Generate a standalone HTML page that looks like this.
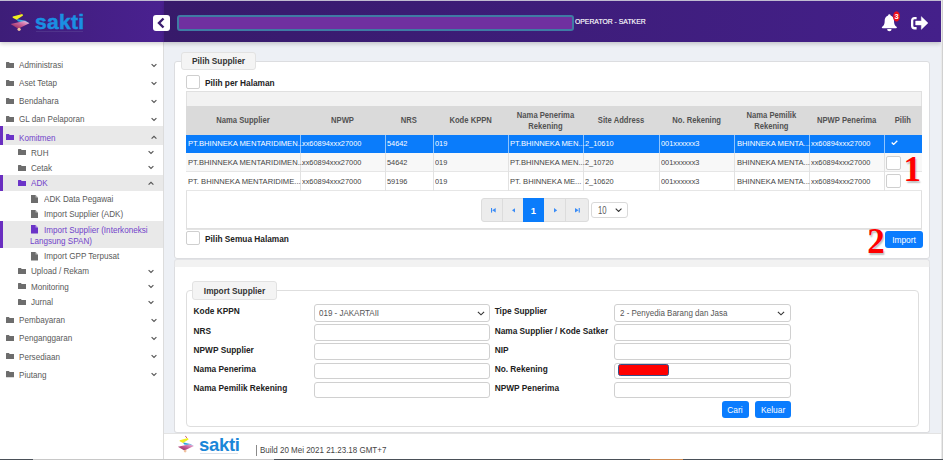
<!DOCTYPE html>
<html><head><meta charset="utf-8">
<style>
*{box-sizing:border-box;margin:0;padding:0}
html,body{width:943px;height:460px;overflow:hidden;background:#fff;font-family:"Liberation Sans",sans-serif;color:#333}
.a{position:absolute}
#hdrL{left:0;top:1px;width:164px;height:41.2px;box-shadow:0 2px 4px rgba(0,0,0,0.18);background:linear-gradient(90deg,#3d1d78,#4a2190)}
#hdrR{left:164px;top:1px;width:777px;height:41.2px;box-shadow:0 2px 4px rgba(0,0,0,0.18);background:linear-gradient(90deg,#371a6a,#44208a)}
#topline{left:0;top:0;width:943px;height:1px;background:#c4c0d6}
#rline{left:941px;top:0;width:2px;height:459px;background:linear-gradient(90deg,#f6f6f6,#c4c4c4)}
#side{left:0;top:42px;width:164px;height:417px;background:#fff;border-right:1px solid #dcdcdc}
#content{left:164px;top:42px;width:777px;height:391px;background:#edf0f5}
.st{font-size:9px;line-height:12px;white-space:nowrap;transform:scaleX(0.9);transform-origin:0 0}
.si{position:absolute;left:0;width:163px;height:18px;font-size:8.2px;color:#555;white-space:nowrap}
.si .t{position:absolute;top:0;line-height:18px}
.si .ch{position:absolute;top:6px;width:6px;height:4px}
.hl{background:#e8e8e8}
.hl .bar{position:absolute;left:0;top:0;width:3px;height:100%;background:#6a2ec0}
.act{color:#7a3fd0}
.card{position:absolute;background:#fff;border:1px solid #dcdde0;border-radius:3px}
.legend{position:absolute;background:#f4f4f4;border:1px solid #e2e2e2;border-radius:3px;font-weight:bold;font-size:8.3px;color:#333;text-align:center}
.cb{position:absolute;width:14px;height:14px;border:1px solid #cfcfcf;border-radius:2px;background:#fff}
.lbl{position:absolute;font-size:8.3px;font-weight:bold;color:#222;white-space:nowrap}
table{border-collapse:collapse;table-layout:fixed}
.tb td{font-size:7.2px;white-space:nowrap;overflow:hidden;padding-left:2px;height:19px;border-right:1px solid #e2e2e2;border-bottom:1px solid #e8e8e8}
.tb th{font-size:7.5px;font-weight:bold;color:#555;text-align:center;height:28px;background:#dadada;line-height:10px}
.th{font-size:8.3px;font-weight:bold;color:#525252;text-align:center;line-height:10.5px;transform:scaleX(0.92)}
.td{font-size:8px;line-height:11px;white-space:nowrap;transform:scaleX(0.9);transform-origin:0 0}
.flb{font-size:8.3px;font-weight:bold;color:#222;white-space:nowrap;line-height:11px}
.tx{font-size:8.9px;line-height:11px;white-space:nowrap;transform:scaleX(0.9);transform-origin:0 0}
.inp{position:absolute;background:#fff;border:1px solid #d0d0d0;border-radius:3px}
.btn{position:absolute;background:#0a7cfe;border-radius:3px;color:#fff;font-size:8.4px;text-align:center}
</style></head><body>
<div class="a" id="topline"></div>
<div class="a" id="side"></div>
<div class="a" id="content"></div>
<div class="a" id="hdrL"></div>
<div class="a" id="hdrR"></div>
<!-- logo -->
<svg class="a" style="left:6px;top:8px" width="30" height="28" viewBox="0 0 30 28">
  <defs><linearGradient id="pk" x1="0" y1="1" x2="1" y2="0"><stop offset="0" stop-color="#8a1f4a"/><stop offset="0.55" stop-color="#c8609a"/><stop offset="1" stop-color="#f0c8e8"/></linearGradient>
  <linearGradient id="bl" x1="0" y1="0" x2="1" y2="0"><stop offset="0" stop-color="#1a9ad8"/><stop offset="1" stop-color="#7ac8f0"/></linearGradient></defs>
  <path d="M13.3 3.8 L15.3 5.6" stroke="#c02040" stroke-width="1"/>
  <path d="M10.2 11 L19.5 12.8 L23.3 15.2 L12 13.6 Z" fill="url(#bl)"/>
  <path d="M4.6 16.1 L18.3 13.1 L23.4 15.2 L12.2 20.7 Z" fill="url(#pk)"/>
  <path d="M6.7 8.4 L16.3 5.9 L17.1 7.6 L10.6 11.7 L6.7 9.8 Z" fill="#f0f020"/>
  <circle cx="13.1" cy="21.3" r="1.6" fill="#f0c0a0"/>
</svg>
<div class="a" style="left:35px;top:10px;font-size:21px;font-weight:bold;color:#1a8fe2;letter-spacing:0.3px;line-height:24px;-webkit-text-stroke:0.5px #1a8fe2">sakti</div>
<div class="a" style="left:36px;top:30.5px;width:47px;height:1px;background:#6a5aa0;opacity:0.35"></div>
<!-- toggle -->
<div class="a" style="left:153px;top:14.6px;width:16.6px;height:16.6px;background:#fff;border-radius:3px"></div>
<svg class="a" style="left:153px;top:14.3px" width="17" height="17" viewBox="0 0 17 17"><path d="M10.5 4.5 L6 9 L10.5 13.5" stroke="#3a1c6e" stroke-width="2.4" fill="none"/></svg>
<div class="a" style="left:177px;top:15.3px;width:396.5px;height:16px;background:#7030a0;border:2px solid #3f7ca4;border-radius:3px"></div>
<div class="a" style="left:575.3px;top:17px;font-size:7.6px;color:#fff;line-height:10px;transform:scaleX(0.9);transform-origin:0 0;-webkit-text-stroke:0.15px #fff">OPERATOR - SATKER</div>
<!-- bell -->
<svg class="a" style="left:880px;top:10px" width="22" height="23" viewBox="0 0 22 23">
  <circle cx="9.35" cy="5.4" r="1.2" fill="#fff"/>
  <path d="M9.35 5.6 C6 5.6 4.7 8.2 4.7 11 C4.7 14 3.8 15.9 1.9 17.1 Q1.4 18.2 2.6 18.2 L16.1 18.2 Q17.3 18.2 16.8 17.1 C14.9 15.9 14 14 14 11 C14 8.2 12.7 5.6 9.35 5.6 Z" fill="#fff"/>
  <path d="M7.1 19 L11.6 19 Q11.6 21.3 9.35 21.3 Q7.1 21.3 7.1 19 Z" fill="#fff"/>
  <ellipse cx="16.5" cy="6.4" rx="3.4" ry="5.2" fill="#ee1018"/>
  <text x="16.5" y="9.1" font-size="7.5" font-family="Liberation Sans" fill="#fff" text-anchor="middle" font-weight="bold">3</text>
</svg>
<!-- logout -->
<svg class="a" style="left:911px;top:16px" width="18" height="14" viewBox="0 0 18 14">
  <path d="M5.6 2.15 L3.6 2.15 Q1.15 2.15 1.15 4.6 L1.15 9.8 Q1.15 12.25 3.6 12.25 L5.6 12.25" stroke="#fff" stroke-width="2.3" fill="none"/>
  <path d="M4.6 5 L10.3 5 L10.3 0.6 L17 7 L10.3 13.4 L10.3 9 L4.6 9 Z" fill="#fff" stroke="#fff" stroke-width="0.4" stroke-linejoin="round"/>
</svg>

<div id="sidebar">
<svg class="a" style="left:6px;top:61.7px" width="8.3" height="6.3" viewBox="0 0 9 7" preserveAspectRatio="none"><path d="M0 0.6 Q0 0 0.6 0 L3.2 0 L4 1 L8.4 1 Q9 1 9 1.6 L9 6.4 Q9 7 8.4 7 L0.6 7 Q0 7 0 6.4 Z" fill="#6d6d6d"/></svg>
<div class="a st" style="left:18.8px;top:59px;color:#5a5a5a">Administrasi</div>
<svg class="a" style="left:151px;top:62.5px" width="6" height="5" viewBox="0 0 6 5"><path d="M0.6 1.1 L3 3.4 L5.4 1.1" stroke="#555" stroke-width="1.15" fill="none"/></svg>
<svg class="a" style="left:6px;top:79.9px" width="8.3" height="6.3" viewBox="0 0 9 7" preserveAspectRatio="none"><path d="M0 0.6 Q0 0 0.6 0 L3.2 0 L4 1 L8.4 1 Q9 1 9 1.6 L9 6.4 Q9 7 8.4 7 L0.6 7 Q0 7 0 6.4 Z" fill="#6d6d6d"/></svg>
<div class="a st" style="left:18.8px;top:77.2px;color:#5a5a5a">Aset Tetap</div>
<svg class="a" style="left:151px;top:80.7px" width="6" height="5" viewBox="0 0 6 5"><path d="M0.6 1.1 L3 3.4 L5.4 1.1" stroke="#555" stroke-width="1.15" fill="none"/></svg>
<svg class="a" style="left:6px;top:98.0px" width="8.3" height="6.3" viewBox="0 0 9 7" preserveAspectRatio="none"><path d="M0 0.6 Q0 0 0.6 0 L3.2 0 L4 1 L8.4 1 Q9 1 9 1.6 L9 6.4 Q9 7 8.4 7 L0.6 7 Q0 7 0 6.4 Z" fill="#6d6d6d"/></svg>
<div class="a st" style="left:18.8px;top:95.3px;color:#5a5a5a">Bendahara</div>
<svg class="a" style="left:151px;top:98.8px" width="6" height="5" viewBox="0 0 6 5"><path d="M0.6 1.1 L3 3.4 L5.4 1.1" stroke="#555" stroke-width="1.15" fill="none"/></svg>
<svg class="a" style="left:6px;top:116.10000000000001px" width="8.3" height="6.3" viewBox="0 0 9 7" preserveAspectRatio="none"><path d="M0 0.6 Q0 0 0.6 0 L3.2 0 L4 1 L8.4 1 Q9 1 9 1.6 L9 6.4 Q9 7 8.4 7 L0.6 7 Q0 7 0 6.4 Z" fill="#6d6d6d"/></svg>
<div class="a st" style="left:18.8px;top:113.4px;color:#5a5a5a">GL dan Pelaporan</div>
<svg class="a" style="left:151px;top:116.9px" width="6" height="5" viewBox="0 0 6 5"><path d="M0.6 1.1 L3 3.4 L5.4 1.1" stroke="#555" stroke-width="1.15" fill="none"/></svg>
<div class="a" style="left:0;top:126px;width:163px;height:18.5px;background:#e9e9e9"></div>
<div class="a" style="left:0;top:126px;width:3px;height:18.5px;background:#6a2ec0"></div>
<svg class="a" style="left:6px;top:134.2px" width="8.3" height="6.3" viewBox="0 0 9 7" preserveAspectRatio="none"><path d="M0 0.6 Q0 0 0.6 0 L3.2 0 L4 1 L8.4 1 Q9 1 9 1.6 L9 6.4 Q9 7 8.4 7 L0.6 7 Q0 7 0 6.4 Z" fill="#6b34c8"/></svg>
<div class="a st" style="left:18.8px;top:131.5px;color:#7143c9">Komitmen</div>
<svg class="a" style="left:151px;top:135.0px" width="6" height="5" viewBox="0 0 6 5"><path d="M0.6 3.6 L3 1.3 L5.4 3.6" stroke="#555" stroke-width="1.15" fill="none"/></svg>
<svg class="a" style="left:17.5px;top:149.2px" width="8.3" height="6.3" viewBox="0 0 9 7" preserveAspectRatio="none"><path d="M0 0.6 Q0 0 0.6 0 L3.2 0 L4 1 L8.4 1 Q9 1 9 1.6 L9 6.4 Q9 7 8.4 7 L0.6 7 Q0 7 0 6.4 Z" fill="#6d6d6d"/></svg>
<div class="a st" style="left:30.8px;top:146.5px;color:#5a5a5a">RUH</div>
<svg class="a" style="left:147.5px;top:150.0px" width="6" height="5" viewBox="0 0 6 5"><path d="M0.6 1.1 L3 3.4 L5.4 1.1" stroke="#555" stroke-width="1.15" fill="none"/></svg>
<svg class="a" style="left:17.5px;top:164.5px" width="8.3" height="6.3" viewBox="0 0 9 7" preserveAspectRatio="none"><path d="M0 0.6 Q0 0 0.6 0 L3.2 0 L4 1 L8.4 1 Q9 1 9 1.6 L9 6.4 Q9 7 8.4 7 L0.6 7 Q0 7 0 6.4 Z" fill="#6d6d6d"/></svg>
<div class="a st" style="left:30.8px;top:161.8px;color:#5a5a5a">Cetak</div>
<svg class="a" style="left:147.5px;top:165.3px" width="6" height="5" viewBox="0 0 6 5"><path d="M0.6 1.1 L3 3.4 L5.4 1.1" stroke="#555" stroke-width="1.15" fill="none"/></svg>
<div class="a" style="left:0;top:175px;width:163px;height:15.5px;background:#e9e9e9"></div>
<div class="a" style="left:0;top:175px;width:3px;height:15.5px;background:#6a2ec0"></div>
<svg class="a" style="left:17.5px;top:179.7px" width="8.3" height="6.3" viewBox="0 0 9 7" preserveAspectRatio="none"><path d="M0 0.6 Q0 0 0.6 0 L3.2 0 L4 1 L8.4 1 Q9 1 9 1.6 L9 6.4 Q9 7 8.4 7 L0.6 7 Q0 7 0 6.4 Z" fill="#6b34c8"/></svg>
<div class="a st" style="left:30.8px;top:177px;color:#7143c9">ADK</div>
<svg class="a" style="left:147.5px;top:180.5px" width="6" height="5" viewBox="0 0 6 5"><path d="M0.6 3.6 L3 1.3 L5.4 3.6" stroke="#555" stroke-width="1.15" fill="none"/></svg>
<svg class="a" style="left:31.3px;top:194.60000000000002px" width="7" height="8.5" viewBox="0 0 7 8.5"><path d="M0 0 L4.5 0 L7 2.5 L7 8.5 L0 8.5 Z" fill="#6d6d6d"/><path d="M4.5 0 L4.5 2.5 L7 2.5" fill="#fff" opacity="0.5"/></svg>
<div class="a st" style="left:43.5px;top:192.8px;color:#5a5a5a">ADK Data Pegawai</div>
<svg class="a" style="left:31.3px;top:209.8px" width="7" height="8.5" viewBox="0 0 7 8.5"><path d="M0 0 L4.5 0 L7 2.5 L7 8.5 L0 8.5 Z" fill="#6d6d6d"/><path d="M4.5 0 L4.5 2.5 L7 2.5" fill="#fff" opacity="0.5"/></svg>
<div class="a st" style="left:43.5px;top:208px;color:#5a5a5a">Import Supplier (ADK)</div>
<div class="a" style="left:0;top:221px;width:163px;height:27px;background:#e9e9e9"></div>
<div class="a" style="left:0;top:221px;width:3px;height:27px;background:#6a2ec0"></div>
<svg class="a" style="left:31.3px;top:225.4px" width="7" height="8.5" viewBox="0 0 7 8.5"><path d="M0 0 L4.5 0 L7 2.5 L7 8.5 L0 8.5 Z" fill="#6b34c8"/><path d="M4.5 0 L4.5 2.5 L7 2.5" fill="#fff" opacity="0.5"/></svg>
<div class="a st" style="left:43.5px;top:223.6px;color:#7143c9">Import Supplier (Interkoneksi</div>
<div class="a st" style="left:29.7px;top:234.6px;color:#7143c9">Langsung SPAN)</div>
<svg class="a" style="left:31.3px;top:252.0px" width="7" height="8.5" viewBox="0 0 7 8.5"><path d="M0 0 L4.5 0 L7 2.5 L7 8.5 L0 8.5 Z" fill="#6d6d6d"/><path d="M4.5 0 L4.5 2.5 L7 2.5" fill="#fff" opacity="0.5"/></svg>
<div class="a st" style="left:43.5px;top:250.2px;color:#5a5a5a">Import GPP Terpusat</div>
<svg class="a" style="left:17.5px;top:268.09999999999997px" width="8.3" height="6.3" viewBox="0 0 9 7" preserveAspectRatio="none"><path d="M0 0.6 Q0 0 0.6 0 L3.2 0 L4 1 L8.4 1 Q9 1 9 1.6 L9 6.4 Q9 7 8.4 7 L0.6 7 Q0 7 0 6.4 Z" fill="#6d6d6d"/></svg>
<div class="a st" style="left:30.8px;top:265.4px;color:#5a5a5a">Upload / Rekam</div>
<svg class="a" style="left:147.5px;top:268.9px" width="6" height="5" viewBox="0 0 6 5"><path d="M0.6 1.1 L3 3.4 L5.4 1.1" stroke="#555" stroke-width="1.15" fill="none"/></svg>
<svg class="a" style="left:17.5px;top:283.2px" width="8.3" height="6.3" viewBox="0 0 9 7" preserveAspectRatio="none"><path d="M0 0.6 Q0 0 0.6 0 L3.2 0 L4 1 L8.4 1 Q9 1 9 1.6 L9 6.4 Q9 7 8.4 7 L0.6 7 Q0 7 0 6.4 Z" fill="#6d6d6d"/></svg>
<div class="a st" style="left:30.8px;top:280.5px;color:#5a5a5a">Monitoring</div>
<svg class="a" style="left:147.5px;top:284.0px" width="6" height="5" viewBox="0 0 6 5"><path d="M0.6 1.1 L3 3.4 L5.4 1.1" stroke="#555" stroke-width="1.15" fill="none"/></svg>
<svg class="a" style="left:17.5px;top:298.9px" width="8.3" height="6.3" viewBox="0 0 9 7" preserveAspectRatio="none"><path d="M0 0.6 Q0 0 0.6 0 L3.2 0 L4 1 L8.4 1 Q9 1 9 1.6 L9 6.4 Q9 7 8.4 7 L0.6 7 Q0 7 0 6.4 Z" fill="#6d6d6d"/></svg>
<div class="a st" style="left:30.8px;top:296.2px;color:#5a5a5a">Jurnal</div>
<svg class="a" style="left:147.5px;top:299.7px" width="6" height="5" viewBox="0 0 6 5"><path d="M0.6 1.1 L3 3.4 L5.4 1.1" stroke="#555" stroke-width="1.15" fill="none"/></svg>
<svg class="a" style="left:6px;top:317.0px" width="8.3" height="6.3" viewBox="0 0 9 7" preserveAspectRatio="none"><path d="M0 0.6 Q0 0 0.6 0 L3.2 0 L4 1 L8.4 1 Q9 1 9 1.6 L9 6.4 Q9 7 8.4 7 L0.6 7 Q0 7 0 6.4 Z" fill="#6d6d6d"/></svg>
<div class="a st" style="left:18.8px;top:314.3px;color:#5a5a5a">Pembayaran</div>
<svg class="a" style="left:151px;top:317.8px" width="6" height="5" viewBox="0 0 6 5"><path d="M0.6 1.1 L3 3.4 L5.4 1.1" stroke="#555" stroke-width="1.15" fill="none"/></svg>
<svg class="a" style="left:6px;top:335.09999999999997px" width="8.3" height="6.3" viewBox="0 0 9 7" preserveAspectRatio="none"><path d="M0 0.6 Q0 0 0.6 0 L3.2 0 L4 1 L8.4 1 Q9 1 9 1.6 L9 6.4 Q9 7 8.4 7 L0.6 7 Q0 7 0 6.4 Z" fill="#6d6d6d"/></svg>
<div class="a st" style="left:18.8px;top:332.4px;color:#5a5a5a">Penganggaran</div>
<svg class="a" style="left:151px;top:335.9px" width="6" height="5" viewBox="0 0 6 5"><path d="M0.6 1.1 L3 3.4 L5.4 1.1" stroke="#555" stroke-width="1.15" fill="none"/></svg>
<svg class="a" style="left:6px;top:353.2px" width="8.3" height="6.3" viewBox="0 0 9 7" preserveAspectRatio="none"><path d="M0 0.6 Q0 0 0.6 0 L3.2 0 L4 1 L8.4 1 Q9 1 9 1.6 L9 6.4 Q9 7 8.4 7 L0.6 7 Q0 7 0 6.4 Z" fill="#6d6d6d"/></svg>
<div class="a st" style="left:18.8px;top:350.5px;color:#5a5a5a">Persediaan</div>
<svg class="a" style="left:151px;top:354.0px" width="6" height="5" viewBox="0 0 6 5"><path d="M0.6 1.1 L3 3.4 L5.4 1.1" stroke="#555" stroke-width="1.15" fill="none"/></svg>
<svg class="a" style="left:6px;top:371.3px" width="8.3" height="6.3" viewBox="0 0 9 7" preserveAspectRatio="none"><path d="M0 0.6 Q0 0 0.6 0 L3.2 0 L4 1 L8.4 1 Q9 1 9 1.6 L9 6.4 Q9 7 8.4 7 L0.6 7 Q0 7 0 6.4 Z" fill="#6d6d6d"/></svg>
<div class="a st" style="left:18.8px;top:368.6px;color:#5a5a5a">Piutang</div>
<svg class="a" style="left:151px;top:372.1px" width="6" height="5" viewBox="0 0 6 5"><path d="M0.6 1.1 L3 3.4 L5.4 1.1" stroke="#555" stroke-width="1.15" fill="none"/></svg>
</div><!--/sidebar-->

<!-- card 1 -->
<div class="card" style="left:174px;top:61px;width:756px;height:198px"></div>
<div class="legend" style="left:181px;top:52.2px;width:75px;height:18.3px;line-height:16.5px">Pilih Supplier</div>
<div class="cb" style="left:186px;top:75px"></div>
<div class="lbl" style="left:205px;top:78px">Pilih per Halaman</div>

<div class="a" style="left:186px;top:91px;width:736px;height:138px;border:1px solid #e0e0e0"></div>
<div class="a" style="left:187px;top:92px;width:734px;height:14px;background:#f2f2f2"></div>

<!--table-->
<div class="a" style="left:186px;top:106px;width:736px;height:28.5px;background:#dadada"></div>
<div class="a th" style="left:186px;top:115px;width:114px">Nama Supplier</div>
<div class="a th" style="left:300px;top:115px;width:85px">NPWP</div>
<div class="a th" style="left:385px;top:115px;width:47.69999999999999px">NRS</div>
<div class="a th" style="left:432.7px;top:115px;width:75.30000000000001px">Kode KPPN</div>
<div class="a th" style="left:508px;top:110px;width:75px">Nama Penerima<br>Rekening</div>
<div class="a th" style="left:583px;top:115px;width:76px">Site Address</div>
<div class="a th" style="left:659px;top:115px;width:75.29999999999995px">No. Rekening</div>
<div class="a th" style="left:734.3px;top:110px;width:74.70000000000005px">Nama Pemilik<br>Rekening</div>
<div class="a th" style="left:809px;top:115px;width:75.29999999999995px">NPWP Penerima</div>
<div class="a th" style="left:884.3px;top:115px;width:37.700000000000045px">Pilih</div>
<div class="a" style="left:186px;top:134.5px;width:736px;height:18.5px;background:#0a7cfb;border-bottom:1px solid #0a7cfb"></div>
<div class="a" style="left:300px;top:134.5px;width:1px;height:18.5px;background:rgba(255,255,255,0.55)"></div>
<div class="a" style="left:385px;top:134.5px;width:1px;height:18.5px;background:rgba(255,255,255,0.55)"></div>
<div class="a" style="left:432.7px;top:134.5px;width:1px;height:18.5px;background:rgba(255,255,255,0.55)"></div>
<div class="a" style="left:508px;top:134.5px;width:1px;height:18.5px;background:rgba(255,255,255,0.55)"></div>
<div class="a" style="left:583px;top:134.5px;width:1px;height:18.5px;background:rgba(255,255,255,0.55)"></div>
<div class="a" style="left:659px;top:134.5px;width:1px;height:18.5px;background:rgba(255,255,255,0.55)"></div>
<div class="a" style="left:734.3px;top:134.5px;width:1px;height:18.5px;background:rgba(255,255,255,0.55)"></div>
<div class="a" style="left:809px;top:134.5px;width:1px;height:18.5px;background:rgba(255,255,255,0.55)"></div>
<div class="a" style="left:884.3px;top:134.5px;width:1px;height:18.5px;background:rgba(255,255,255,0.55)"></div>
<div class="a td" style="left:188.2px;top:138.25px;color:#fff;transform:scaleX(0.95)">PT.BHINNEKA MENTARIDIMEN...</div>
<div class="a td" style="left:302.2px;top:138.25px;color:#fff;transform:scaleX(0.92)">xx60894xxx27000</div>
<div class="a td" style="left:387.2px;top:138.25px;color:#fff;transform:scaleX(0.92)">54642</div>
<div class="a td" style="left:434.9px;top:138.25px;color:#fff;transform:scaleX(0.92)">019</div>
<div class="a td" style="left:510.2px;top:138.25px;color:#fff;transform:scaleX(0.95)">PT.BHINNEKA MEN...</div>
<div class="a td" style="left:585.2px;top:138.25px;color:#fff;transform:scaleX(0.92)">2_10610</div>
<div class="a td" style="left:661.2px;top:138.25px;color:#fff;transform:scaleX(0.92)">001xxxxxx3</div>
<div class="a td" style="left:736.5px;top:138.25px;color:#fff;transform:scaleX(0.95)">BHINNEKA MENTA...</div>
<div class="a td" style="left:811.2px;top:138.25px;color:#fff;transform:scaleX(0.92)">xx60894xxx27000</div>
<div class="a" style="left:186px;top:153px;width:736px;height:19px;background:#f8f8f8;border-bottom:1px solid #e6e6e6"></div>
<div class="a" style="left:300px;top:153px;width:1px;height:19px;background:#e2e2e2"></div>
<div class="a" style="left:385px;top:153px;width:1px;height:19px;background:#e2e2e2"></div>
<div class="a" style="left:432.7px;top:153px;width:1px;height:19px;background:#e2e2e2"></div>
<div class="a" style="left:508px;top:153px;width:1px;height:19px;background:#e2e2e2"></div>
<div class="a" style="left:583px;top:153px;width:1px;height:19px;background:#e2e2e2"></div>
<div class="a" style="left:659px;top:153px;width:1px;height:19px;background:#e2e2e2"></div>
<div class="a" style="left:734.3px;top:153px;width:1px;height:19px;background:#e2e2e2"></div>
<div class="a" style="left:809px;top:153px;width:1px;height:19px;background:#e2e2e2"></div>
<div class="a" style="left:884.3px;top:153px;width:1px;height:19px;background:#e2e2e2"></div>
<div class="a td" style="left:188.2px;top:157.0px;color:#444;transform:scaleX(0.95)">PT.BHINNEKA MENTARIDIMEN...</div>
<div class="a td" style="left:302.2px;top:157.0px;color:#444;transform:scaleX(0.92)">xx60894xxx27000</div>
<div class="a td" style="left:387.2px;top:157.0px;color:#444;transform:scaleX(0.92)">54642</div>
<div class="a td" style="left:434.9px;top:157.0px;color:#444;transform:scaleX(0.92)">019</div>
<div class="a td" style="left:510.2px;top:157.0px;color:#444;transform:scaleX(0.95)">PT.BHINNEKA MEN...</div>
<div class="a td" style="left:585.2px;top:157.0px;color:#444;transform:scaleX(0.92)">2_10720</div>
<div class="a td" style="left:661.2px;top:157.0px;color:#444;transform:scaleX(0.92)">001xxxxxx3</div>
<div class="a td" style="left:736.5px;top:157.0px;color:#444;transform:scaleX(0.95)">BHINNEKA MENTA...</div>
<div class="a td" style="left:811.2px;top:157.0px;color:#444;transform:scaleX(0.92)">xx60894xxx27000</div>
<div class="a" style="left:186px;top:172px;width:736px;height:18.5px;background:#fff;border-bottom:1px solid #e6e6e6"></div>
<div class="a" style="left:300px;top:172px;width:1px;height:18.5px;background:#e2e2e2"></div>
<div class="a" style="left:385px;top:172px;width:1px;height:18.5px;background:#e2e2e2"></div>
<div class="a" style="left:432.7px;top:172px;width:1px;height:18.5px;background:#e2e2e2"></div>
<div class="a" style="left:508px;top:172px;width:1px;height:18.5px;background:#e2e2e2"></div>
<div class="a" style="left:583px;top:172px;width:1px;height:18.5px;background:#e2e2e2"></div>
<div class="a" style="left:659px;top:172px;width:1px;height:18.5px;background:#e2e2e2"></div>
<div class="a" style="left:734.3px;top:172px;width:1px;height:18.5px;background:#e2e2e2"></div>
<div class="a" style="left:809px;top:172px;width:1px;height:18.5px;background:#e2e2e2"></div>
<div class="a" style="left:884.3px;top:172px;width:1px;height:18.5px;background:#e2e2e2"></div>
<div class="a td" style="left:188.2px;top:175.75px;color:#444;transform:scaleX(0.95)">PT. BHINNEKA MENTARIDIME...</div>
<div class="a td" style="left:302.2px;top:175.75px;color:#444;transform:scaleX(0.92)">xx60894xxx27000</div>
<div class="a td" style="left:387.2px;top:175.75px;color:#444;transform:scaleX(0.92)">59196</div>
<div class="a td" style="left:434.9px;top:175.75px;color:#444;transform:scaleX(0.92)">019</div>
<div class="a td" style="left:510.2px;top:175.75px;color:#444;transform:scaleX(0.95)">PT. BHINNEKA ME...</div>
<div class="a td" style="left:585.2px;top:175.75px;color:#444;transform:scaleX(0.92)">2_10620</div>
<div class="a td" style="left:661.2px;top:175.75px;color:#444;transform:scaleX(0.92)">001xxxxxx3</div>
<div class="a td" style="left:736.5px;top:175.75px;color:#444;transform:scaleX(0.95)">BHINNEKA MENTA...</div>
<div class="a td" style="left:811.2px;top:175.75px;color:#444;transform:scaleX(0.92)">xx60894xxx27000</div>
<svg class="a" style="left:890.5px;top:140px" width="7" height="5.4" viewBox="0 0 7 5.4"><path d="M0.7 2.6 L2.6 4.4 L6.3 0.7" stroke="#fff" stroke-width="1.35" fill="none"/></svg>
<div class="cb" style="left:886px;top:155.5px;width:15px;height:14px"></div>
<div class="cb" style="left:886px;top:174px;width:15px;height:14px"></div>
<div class="a" style="left:903.5px;top:151.5px;font-family:'Liberation Serif';font-weight:bold;font-size:35px;color:#f00;line-height:35px;z-index:10;text-shadow:1px 1.5px 1.5px rgba(0,0,0,0.25)">1</div>
<!--/table-->
<div class="cb" style="left:186px;top:231px"></div>
<div class="lbl" style="left:205px;top:234px">Pilih Semua Halaman</div>
<div class="btn" style="left:885px;top:231px;width:38px;height:17px;line-height:18px">Import</div>
<div class="a" style="left:867.3px;top:223.5px;font-family:'Liberation Serif';font-weight:bold;font-size:35px;color:#f00;line-height:35px;z-index:10;text-shadow:1px 1.5px 1.5px rgba(0,0,0,0.25)">2</div>

<!-- card 2 -->
<div class="a" style="left:174px;top:259px;width:756px;height:8px;background:#f2f2f2;border:1px solid #e2e3e6;border-bottom:none;border-radius:3px 3px 0 0"></div>
<div class="card" style="left:174px;top:267px;width:756px;height:166px;border-top:none;border-radius:0 0 3px 3px"></div>
<div class="a" style="left:186px;top:290px;width:733px;height:137px;border:1px solid #dedede;border-radius:4px"></div>
<div class="legend" style="left:192px;top:281px;width:85px;height:19px;line-height:18px">Import Supplier</div>

<!-- footer -->
<div class="a" style="left:164px;top:433px;width:777px;height:26px;background:#fff;border-top:1px solid #e3e3e3"></div>
<div class="a" style="left:0;top:459px;width:943px;height:1px;background:#4a5058"></div><div class="a" style="left:33px;top:459px;width:241px;height:1px;background:#c8c8c8"></div><div class="a" style="left:650px;top:459px;width:33px;height:1px;background:#d08a50"></div>
<!--rest-->
<div class="a" style="left:481px;top:198px;width:107.5px;height:23.5px;background:#ececec;border:1px solid #dcdcdc;border-radius:3px"></div>
<div class="a" style="left:502.4px;top:198px;width:1px;height:23.5px;background:#dcdcdc"></div>
<div class="a" style="left:565px;top:198px;width:1px;height:23.5px;background:#dcdcdc"></div>
<div class="a" style="left:523px;top:198px;width:21px;height:23.5px;background:#0a7cfb"></div>
<div class="a" style="left:523px;top:204.5px;width:21px;font-size:9.5px;font-weight:bold;color:#fff;text-align:center;line-height:11px">1</div>
<svg class="a" style="left:490.8px;top:207.7px" width="5" height="5" viewBox="0 0 5 5"><rect x="0" y="0" width="1.1" height="4.6" fill="#3a8cf6"/><path d="M4.7 0 L1.2 2.3 L4.7 4.6 Z" fill="#3a8cf6"/></svg>
<svg class="a" style="left:512.3px;top:207.7px" width="3.2" height="5" viewBox="0 0 3.2 5"><path d="M3.2 0 L0 2.3 L3.2 4.6 Z" fill="#3a8cf6"/></svg>
<svg class="a" style="left:554.3px;top:207.7px" width="3.2" height="5" viewBox="0 0 3.2 5"><path d="M0 0 L3.2 2.3 L0 4.6 Z" fill="#3a8cf6"/></svg>
<svg class="a" style="left:574.6px;top:207.7px" width="5" height="5" viewBox="0 0 5 5"><rect x="3.7" y="0" width="1.1" height="4.6" fill="#3a8cf6"/><path d="M0 0 L3.6 2.3 L0 4.6 Z" fill="#3a8cf6"/></svg>
<div class="a" style="left:591.3px;top:201.7px;width:36.3px;height:16.8px;background:#fff;border:1px solid #d9d9d9;border-radius:3px"></div>
<div class="a" style="left:597.6px;top:205px;font-size:10.4px;line-height:11px;color:#5a5a5a;transform:scaleX(0.74);transform-origin:0 0">10</div>
<svg class="a" style="left:615px;top:207.5px" width="7.2" height="4.4" viewBox="0 0 7.2 4.4"><path d="M0.7 0.7 L3.6 3.5 L6.5 0.7" stroke="#333" stroke-width="1.05" fill="none"/></svg>
<div class="a" style="left:186px;top:228.5px;width:736px;height:1px;background:#e4e4e4"></div>
<div class="a flb" style="left:193.6px;top:305.6px">Kode KPPN</div>
<div class="a flb" style="left:193.6px;top:325.6px">NRS</div>
<div class="a flb" style="left:193.6px;top:344.8px">NPWP Supplier</div>
<div class="a flb" style="left:193.6px;top:364px">Nama Penerima</div>
<div class="a flb" style="left:193.6px;top:383px">Nama Pemilik Rekening</div>
<div class="a flb" style="left:494.7px;top:305.6px">Tipe Supplier</div>
<div class="a flb" style="left:494.7px;top:325.7px">Nama Supplier / Kode Satker</div>
<div class="a flb" style="left:494.7px;top:344.5px">NIP</div>
<div class="a flb" style="left:494.7px;top:363.5px">No. Rekening</div>
<div class="a flb" style="left:494.7px;top:382.7px">NPWP Penerima</div>
<div class="a inp" style="left:314px;top:304.4px;width:175.8px;height:17.30000000000001px"></div>
<div class="a inp" style="left:614.2px;top:304.4px;width:176.6px;height:17.30000000000001px"></div>
<div class="a inp" style="left:314px;top:324.4px;width:175.8px;height:16.600000000000023px"></div>
<div class="a inp" style="left:614.2px;top:324.4px;width:176.6px;height:16.600000000000023px"></div>
<div class="a inp" style="left:314px;top:343.4px;width:175.8px;height:16.600000000000023px"></div>
<div class="a inp" style="left:614.2px;top:343.4px;width:176.6px;height:16.600000000000023px"></div>
<div class="a inp" style="left:314px;top:362.8px;width:175.8px;height:16.5px"></div>
<div class="a inp" style="left:614.2px;top:362.8px;width:176.6px;height:16.5px"></div>
<div class="a inp" style="left:314px;top:382px;width:175.8px;height:16.399999999999977px"></div>
<div class="a inp" style="left:614.2px;top:382px;width:176.6px;height:16.399999999999977px"></div>
<div class="a tx" style="left:319px;top:308px;color:#555">019 - JAKARTAII</div>
<svg class="a" style="left:477px;top:311px" width="8" height="5" viewBox="0 0 8 5"><path d="M0.9 0.9 L4 3.8 L7.1 0.9" stroke="#333" stroke-width="1.15" fill="none"/></svg>
<div class="a tx" style="left:620px;top:308px;color:#555">2 - Penyedia Barang dan Jasa</div>
<svg class="a" style="left:777px;top:311px" width="8" height="5" viewBox="0 0 8 5"><path d="M0.9 0.9 L4 3.8 L7.1 0.9" stroke="#333" stroke-width="1.15" fill="none"/></svg>
<div class="a" style="left:618px;top:363.6px;width:50.5px;height:12.3px;background:#f00;border:1.5px solid #34508a;border-radius:2.5px"></div>
<div class="btn" style="left:721.5px;top:401.4px;width:27px;height:16.7px;line-height:18px">Cari</div>
<div class="btn" style="left:755.4px;top:401.4px;width:35.4px;height:16.7px;line-height:18px">Keluar</div>
<svg class="a" style="left:173.8px;top:432.8px" width="25.5" height="23.8" viewBox="0 0 30 28">
  <path d="M13.3 3.8 L15.3 5.6" stroke="#c02040" stroke-width="1"/>
  <path d="M10.2 11 L19.5 12.8 L23.3 15.2 L12 13.6 Z" fill="url(#bl)"/>
  <path d="M4.6 16.1 L18.3 13.1 L23.4 15.2 L12.2 20.7 Z" fill="url(#pk)"/>
  <path d="M6.7 8.4 L16.3 5.9 L17.1 7.6 L10.6 11.7 L6.7 9.8 Z" fill="#f0f020"/>
  <circle cx="13.1" cy="21.3" r="1.6" fill="#f0c0a0"/>
</svg>
<div class="a" style="left:199px;top:435px;font-size:18.5px;font-weight:bold;color:#1a86d8;letter-spacing:-0.3px;line-height:20px">sakti</div>
<div class="a" style="left:200px;top:452.5px;width:38px;height:0.8px;background:#9aa8c0;opacity:0.35"></div>
<div class="a" style="left:255.5px;top:444.5px;width:1px;height:11px;background:#8a8a8a"></div>
<div class="a tx" style="left:259.8px;top:445px;color:#444">Build 20 Mei 2021 21.23.18 GMT+7</div>
<!--/rest-->
<div class="a" id="rline"></div>
</body></html>
